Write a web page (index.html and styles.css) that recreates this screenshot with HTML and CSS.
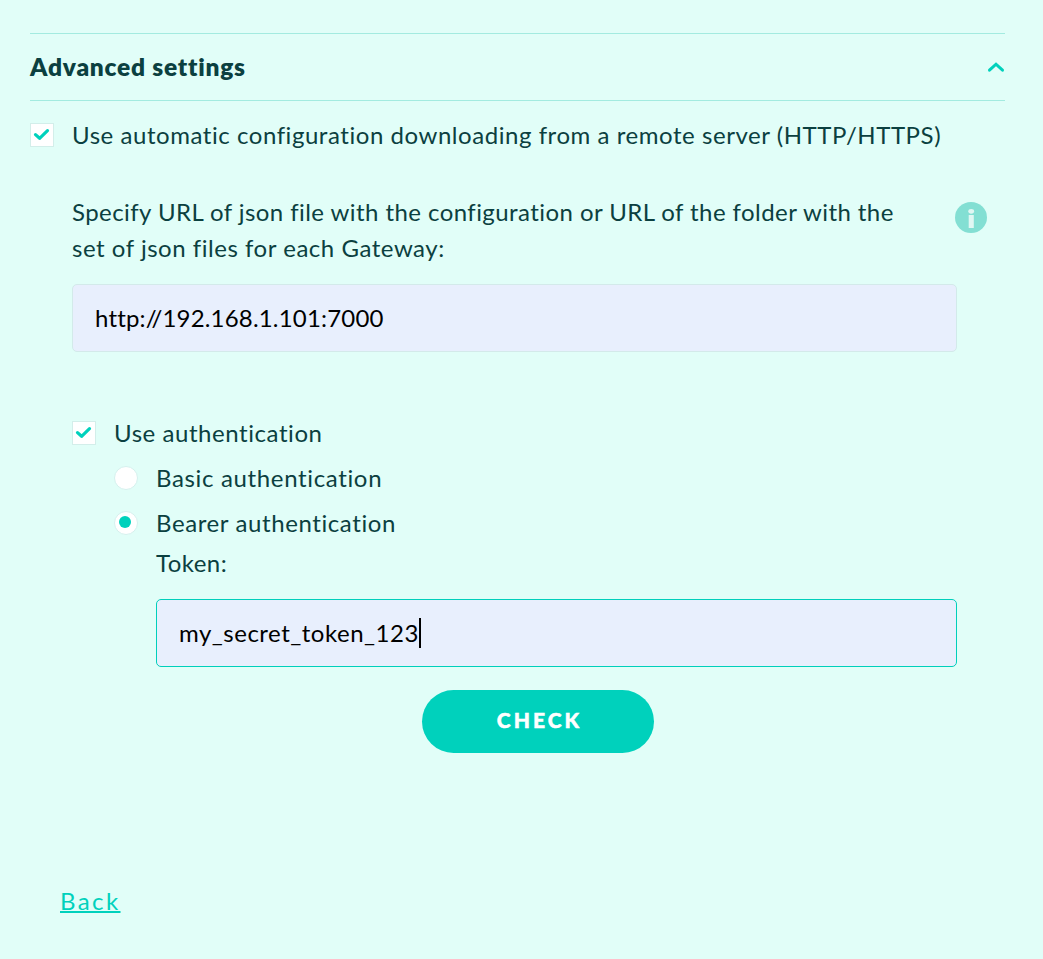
FILE: index.html
```html
<!DOCTYPE html>
<html lang="en">
<head>
<meta charset="utf-8">
<title>Advanced settings</title>
<link rel="stylesheet" href="styles.css">
</head>
<body>
<main class="page">
  <header class="section-head">
    <h2 class="section-title"><span class="t-title">Advanced settings</span></h2>
    <svg class="chevron" viewBox="0 0 18 11"><path d="M2.500 8.200 9 2.200l6.500 6"/></svg>
  </header>
  <label class="option option-auto"><span class="check"><svg viewBox="0 0 22 22"><path d="M4.500 10.600 8.600 14.300 16.500 6.700"/></svg></span><span class="t-auto">Use automatic configuration downloading from a remote server (HTTP/HTTPS)</span></label>
  <section class="config">
    <div class="url-row">
      <p class="url-text"><span class="t-url1">Specify URL of json file with the configuration or URL of the folder with the</span><br><span class="t-url2">set of json files for each Gateway:</span></p>
      <svg class="info" viewBox="0 0 32 31"><ellipse cx="16" cy="15.500" rx="16" ry="15.500"/><path d="M13.700 13h5.100v13h-5.100z"/><ellipse class="info-dot" cx="16.200" cy="9.300" rx="2.900" ry="2.400"/></svg>
    </div>
    <div class="field"><span class="t-http">http://192.168.1.101:7000</span></div>
    <label class="option option-auth"><span class="check"><svg viewBox="0 0 22 22"><path d="M4.500 10.600 8.600 14.300 16.500 6.700"/></svg></span><span class="t-useauth">Use authentication</span></label>
    <div class="auth">
      <label class="option"><span class="radio"></span><span class="t-basic">Basic authentication</span></label>
      <label class="option"><span class="radio radio-on"></span><span class="t-bearer">Bearer authentication</span></label>
      <div class="token">
        <p class="token-label"><span class="t-token">Token:</span></p>
        <div class="field field-active"><span class="t-secret">my_secret_token_123</span><span class="caret"></span></div>
      </div>
    </div>
  </section>
  <button class="button"><span class="t-check">CHECK</span></button>
  <a class="back"><span class="t-back">Back</span></a>
</main>
</body>
</html>
```
FILE: styles.css
```css
* { box-sizing: border-box; margin: 0; padding: 0; }
body { background: #e1fef8; color: #0b4040; font: 24px/36px Lato, sans-serif; font-variant-ligatures: none; }
.page { width: 1043px; height: 959px; padding: 33px 38px 0 30px; white-space: nowrap; display: flex; flex-direction: column; }
.section-head { display: flex; justify-content: space-between; align-items: center; height: 68px; border-top: 1px solid #a3ebe0; border-bottom: 1px solid #a3ebe0; }
.section-title { font-size: 24.5px; font-weight: 800; }
.chevron { width: 18px; height: 11px; fill: none; stroke: #00d1bc; stroke-width: 3; stroke-linecap: round; }
.option { display: flex; align-items: center; gap: 18px; height: 45px; }
.option-auto { height: 36px; margin-top: 16px; }
.check { width: 24px; height: 24px; background: #fff; border: 1px solid #d3eeea; }
.check svg { display: block; width: 22px; height: 22px; fill: none; stroke: #00d1bc; stroke-width: 3.200; stroke-linecap: round; stroke-linejoin: round; }
.config { padding: 41px 48px 0 42px; }
.url-row { display: flex; justify-content: space-between; margin-right: -30px; }
.info { width: 32px; height: 31px; margin-top: 8px; fill: #83dfd3; }
.info path, .info .info-dot { fill: #e0f7f3; }
.field { display: flex; align-items: center; height: 68px; margin-top: 18px; padding-left: 22px; border: 1px solid #d3eaea; border-radius: 5px; background: #e8effd; color: #000; }
.option-auth { height: 36px; margin-top: 63px; }
.auth { padding: 4px 0 0 42px; }
.radio { display: grid; place-items: center; width: 24px; height: 24px; padding: 0 2px 2px 0; background: #fff; border: 1px solid #d5f1ee; border-radius: 50%; }
.radio-on::after { content: ""; width: 12px; height: 12px; border-radius: 50%; background: #00d1bc; }
.token { padding-left: 42px; }
.field-active { border-color: #00cfbb; }
.caret { width: 2px; height: 30px; background: #000; }
.button { width: 232px; height: 63px; margin: 23px 0 0 392px; padding-bottom: 3px; border: 0; border-radius: 32px; background: #00d1bc; color: #fff; font: 900 21px/30px Lato, sans-serif; -webkit-text-stroke: .5px #fff; }
.back { margin: 130px 0 0 30px; color: #00d1bc; text-decoration: underline; text-decoration-thickness: 2px; }
.t-title { letter-spacing: .77px; }
.t-auto { letter-spacing: .55px; }
.t-url1 { letter-spacing: .43px; }
.t-url2 { letter-spacing: .53px; }
.t-http { letter-spacing: .18px; }
.t-useauth { letter-spacing: .56px; }
.t-basic { letter-spacing: .65px; }
.t-bearer { letter-spacing: .6px; }
.t-token { letter-spacing: .45px; }
.t-secret { letter-spacing: .5px; }
.t-check { letter-spacing: 3px; margin-right: -3px; }
.t-back { letter-spacing: 2.400px; }
```
